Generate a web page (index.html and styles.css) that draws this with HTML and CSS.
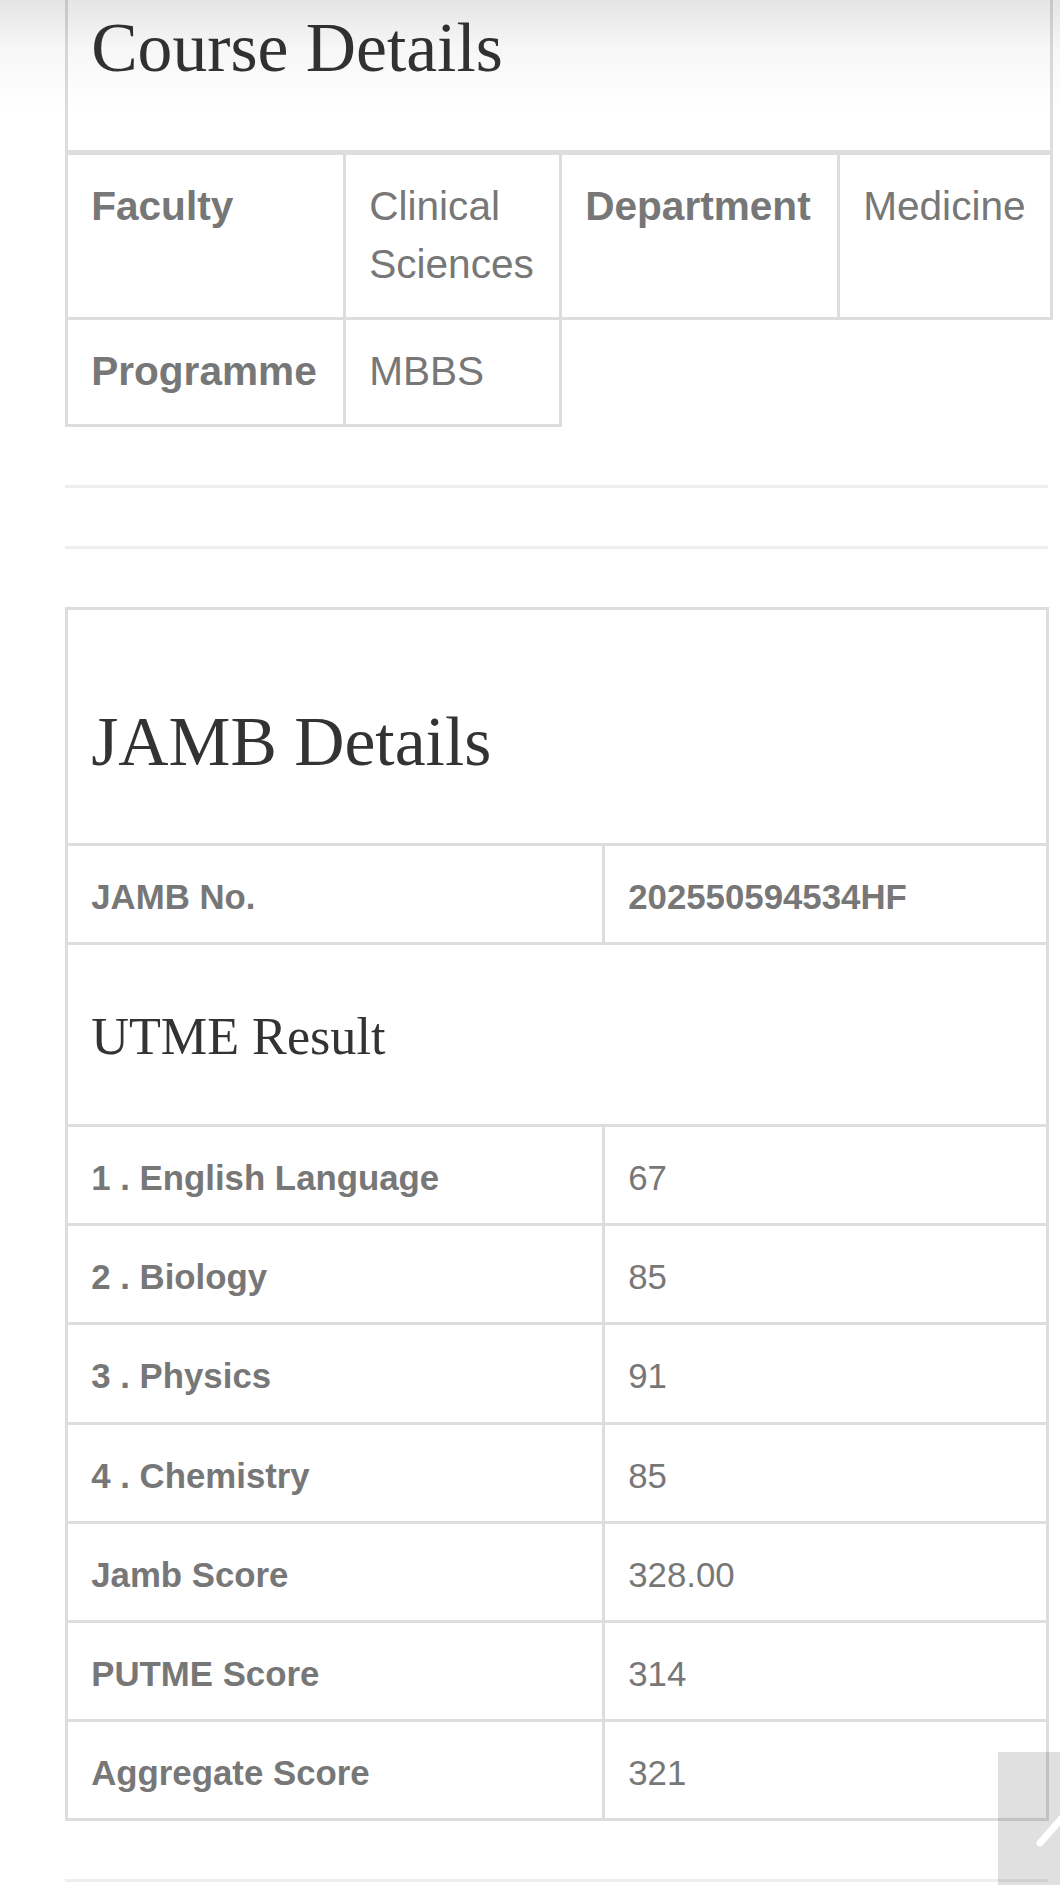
FILE: index.html
```html
<!DOCTYPE html>
<html lang="en">
<head>
<meta charset="utf-8">
<title>Course and JAMB Details</title>
<link rel="stylesheet" href="styles.css">
</head>
<body>
<div class="topshade"></div>
<main class="page">
  <table class="tbl course">
    <colgroup>
      <col class="c1"><col class="c2"><col class="c3"><col class="c4">
    </colgroup>
    <thead>
      <tr><th colspan="4" class="head-cell"><h3 class="h3">Course Details</h3></th></tr>
    </thead>
    <tbody>
      <tr>
        <th>Faculty</th>
        <td>Clinical Sciences</td>
        <th>Department</th>
        <td>Medicine</td>
      </tr>
      <tr>
        <th>Programme</th>
        <td>MBBS</td>
      </tr>
    </tbody>
  </table>

  <hr class="rule">
  <hr class="rule">

  <table class="tbl jamb">
    <colgroup>
      <col class="j1"><col class="j2">
    </colgroup>
    <tbody>
      <tr><td colspan="2" class="head-cell"><h3 class="h3">JAMB Details</h3></td></tr>
      <tr class="row"><th>JAMB No.</th><th>202550594534HF</th></tr>
      <tr><td colspan="2"><h4 class="h4">UTME Result</h4></td></tr>
      <tr class="row"><th>1 . English Language</th><td>67</td></tr>
      <tr class="row"><th>2 . Biology</th><td>85</td></tr>
      <tr class="row"><th>3 . Physics</th><td>91</td></tr>
      <tr class="row"><th>4 . Chemistry</th><td>85</td></tr>
      <tr class="row"><th>Jamb Score</th><td>328.00</td></tr>
      <tr class="row"><th>PUTME Score</th><td>314</td></tr>
      <tr class="row"><th>Aggregate Score</th><td>321</td></tr>
    </tbody>
  </table>

  <hr class="rule">
</main>
<a class="to-top" href="#" aria-label="Back to top">
  <svg class="to-top-icon" width="125" height="140" viewBox="0 0 125 140" aria-hidden="true">
    <polyline points="42,91 64,66 86,91" fill="none" stroke="#fff" stroke-width="7" stroke-linecap="round" stroke-linejoin="round"/>
  </svg>
</a>
</body>
</html>
```

FILE: styles.css
```css
html, body {
  margin: 0;
  padding: 0;
  background: #fff;
}

body {
  font-family: "Liberation Sans", Arial, Helvetica, sans-serif;
  font-size: 40.6px;
  line-height: 1.42857;
  color: #777;
  overflow: hidden;
}

.page {
  width: 983px;
  padding-left: 65px;
  margin-top: -86px;
}

.tbl {
  border-collapse: collapse;
  table-layout: fixed;
  margin-bottom: 58px;
}

.tbl th,
.tbl td {
  border: 3px solid #ddd;
  padding: 23.2px;
  vertical-align: top;
  text-align: left;
}

.tbl th {
  font-weight: 700;
}

.course {
  width: 985px;
}

.course .c1 { width: 278px; }
.course .c2 { width: 216px; }
.course .c3 { width: 278px; }
.course .c4 { width: 213px; }

.course thead th {
  border-bottom-width: 5px;
}

.jamb {
  width: 981px;
  font-size: 34.8px;
}

.jamb .j1 { width: 537px; }
.jamb .j2 { width: 444px; }

.jamb .row th,
.jamb .row td {
  padding-top: 26px;
  padding-bottom: 20.4px;
}

.h3 {
  font-family: "Liberation Serif", "Times New Roman", Times, serif;
  font-weight: 400;
  font-size: 69.6px;
  line-height: 1.42857;
  margin: 58px 0 29px;
  color: #333;
}

.h4 {
  font-family: "Liberation Serif", "Times New Roman", Times, serif;
  font-weight: 400;
  font-size: 52.2px;
  line-height: 1.42857;
  margin: 30px 0 28px;
  color: #333;
}

.rule {
  border: 0;
  border-top: 3px solid #eee;
  margin: 58px 0;
  height: 0;
}

.topshade {
  position: fixed;
  top: 0;
  left: 0;
  right: 0;
  height: 110px;
  background: linear-gradient(to bottom, rgba(0, 0, 0, 0.1), rgba(0, 0, 0, 0.03) 45%, rgba(0, 0, 0, 0));
  pointer-events: none;
  z-index: 5;
}

.to-top {
  position: fixed;
  left: 998px;
  top: 1752px;
  width: 125px;
  height: 140px;
  background: rgba(0, 0, 0, 0.12);
  display: block;
  z-index: 10;
}

.to-top-icon {
  display: block;
}
```
